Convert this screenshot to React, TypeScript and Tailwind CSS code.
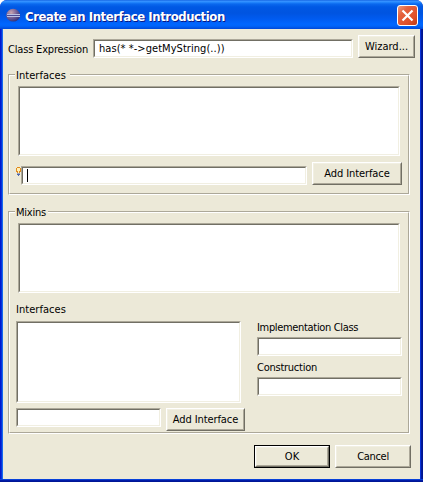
import type { ReactNode } from "react";

function Field({ className = "", children }: { className?: string; children?: ReactNode }) {
  return (
    <div className={`shrink-0 border border-t-[#aca899] border-l-[#aca899] border-r-white border-b-white ${className}`}>
      <div className="flex h-full items-center border border-t-[#716f64] border-l-[#716f64] border-r-[#f1efe2] border-b-[#f1efe2] bg-white">
        {children}
      </div>
    </div>
  );
}

function Button({ className = "", children }: { className?: string; children: ReactNode }) {
  return (
    <button className={`shrink-0 whitespace-nowrap border border-t-white border-l-white border-r-[#716f64] border-b-[#716f64] bg-[#ece9d8] ${className}`}>
      <span className="flex h-full items-center justify-center border border-t-[#f1efe2] border-l-[#f1efe2] border-r-[#aca899] border-b-[#aca899]">
        {children}
      </span>
    </button>
  );
}

function Group({ title, titleClass, className = "", children }: { title: string; titleClass: string; className?: string; children: ReactNode }) {
  return (
    <section className={`ml-[5px] w-[402px] border border-t-[#aca899] border-l-[#aca899] border-r-white border-b-white ${className}`}>
      <div className="h-full border border-t-white border-l-white border-r-[#aca899] border-b-[#aca899]">
        <h2 className={`-mt-[7px] ml-[5px] h-[14px] bg-[#ece9d8] pl-px leading-[14px] ${titleClass}`}>{title}</h2>
        {children}
      </div>
    </section>
  );
}

function EclipseIcon() {
  return (
    <svg className="mt-[2px]" width="16" height="16" viewBox="0 0 16 16">
      <defs>
        <radialGradient id="orb" cx="0.35" cy="0.3" r="0.75">
          <stop offset="0" stopColor="#c9a5b0" />
          <stop offset="0.5" stopColor="#7a6599" />
          <stop offset="1" stopColor="#303078" />
        </radialGradient>
      </defs>
      <ellipse cx="7.2" cy="7.2" rx="6.9" ry="6.4" fill="url(#orb)" />
      <path d="M1 6.5h13M1 8.5h13" stroke="#b9c0e4" />
      <path d="M1 7.5h13" stroke="#4d4991" />
    </svg>
  );
}

function Bulb() {
  return (
    <svg width="5" height="9" viewBox="0 0 5 9" shapeRendering="crispEdges">
      <path d="M1 0h3v1h1v4h-1v1h-3v-1h-1v-4h1z" fill="#e08a1c" />
      <path d="M1 1h3v3h-1v2h-1v-2h-1z" fill="#fff0b8" />
      <path d="M1 6h3v1h-3z" fill="#9ba6c4" />
      <path d="M1 7h3v1h-1v1h-1v-1h-1z" fill="#5068a8" />
    </svg>
  );
}

export default function App() {
  return (
    <div className="h-[482px] w-[423px] bg-white font-['Tahoma','DejaVu_Sans_Condensed','DejaVu_Sans',sans-serif] text-[11px] leading-[14px] text-black">
      <div className="flex h-full flex-col overflow-hidden rounded-t-[7px] bg-[linear-gradient(90deg,#0019cf_0,#0019cf_1px,#0831d9_1px,#0831d9_2px,#166aee_2px,#166aee_3px,#0831d9_3px,#0831d9_421px,#001ea0_421px,#00138c_423px)]">
        <header className="flex h-[29px] shrink-0 items-center bg-[linear-gradient(180deg,#0758dc_0,#3d94ff_1px,#288cff_2px,#0a68ee_4px,#0058e4_7px,#0054e0_13px,#005bf0_19px,#0066ff_24px,#0064fa_26px,#0048d8_29px)] pl-[6px] pr-[5px]">
          <EclipseIcon />
          <h1 className="ml-[3px] mt-[4px] w-[202px] whitespace-nowrap text-[13px] font-bold leading-[16px] tracking-[-0.43px] text-white [text-shadow:1px_1px_0_#0a1883]">
            Create an Interface Introduction
          </h1>
          <span className="ml-auto mt-[2px] flex h-[21px] w-[21px] items-center justify-center rounded-[3px] border border-white bg-[linear-gradient(135deg,#ee9c7c_0,#e4623e_30%,#e0502a_70%,#bf3a14_100%)]">
            <svg width="13" height="13" viewBox="0 0 13 13">
              <path d="M1.5 1.5l10 10M11.5 1.5l-10 10" stroke="#fff" strokeWidth="2.2" />
            </svg>
          </span>
        </header>
        <main className="ml-[3px] h-[450px] w-[417px] shrink-0 bg-[#ece9d8]">
          <div className="flex h-[45px] pl-[5px] pt-[6px]">
            <label className="mt-[8px] w-[85px] whitespace-nowrap tracking-[-0.18px]">Class Expression</label>
            <Field className="mt-[4px] h-[19px] w-[260px]">
              <span className="ml-[4px] mt-px whitespace-nowrap tracking-[0.05px]">has(* *-&gt;getMyString(..))</span>
            </Field>
            <Button className="ml-[5px] h-[23px] w-[57px]">Wizard...</Button>
          </div>
          <Group title="Interfaces" titleClass="w-[55px] tracking-[0.05px]" className="h-[121px]">
            <Field className="ml-[8px] mt-[3px] h-[70px] w-[382px]" />
            <div className="ml-[6px] mt-[6px] flex">
              <div className="flex h-[19px] w-[5px] shrink-0 items-start pt-[5px]">
                <Bulb />
              </div>
              <Field className="mt-[4px] h-[19px] w-[286px]">
                <span className="ml-[4px] h-[13px] w-px bg-black" />
              </Field>
              <Button className="ml-[5px] h-[23px] w-[90px] tracking-[-0.1px]">Add Interface</Button>
            </div>
          </Group>
          <Group title="Mixins" titleClass="w-[33px] tracking-[-0.25px]" className="mt-[16px] h-[223px]">
            <Field className="ml-[8px] mt-[3px] h-[70px] w-[382px]" />
            <div className="ml-[6px] flex">
              <div className="w-[241px]">
                <h3 className="mt-[10px] h-[18px] tracking-[0.05px]">Interfaces</h3>
                <Field className="h-[82px] w-[225px]" />
                <div className="mt-[5px] flex">
                  <Field className="h-[19px] w-[145px]" />
                  <Button className="ml-[5px] h-[23px] w-[79px] tracking-[-0.1px]">Add Interface</Button>
                </div>
              </div>
              <div className="w-[145px]">
                <label className="mt-[28px] block h-[16px] whitespace-nowrap tracking-[-0.33px]">Implementation Class</label>
                <Field className="h-[19px]" />
                <label className="mt-[5px] block h-[16px] tracking-[-0.25px]">Construction</label>
                <Field className="h-[19px]" />
              </div>
            </div>
          </Group>
          <div className="mt-[11px] flex pl-[251px]">
            <div className="h-[23px] w-[76px] border border-black">
              <Button className="h-[21px] w-[74px]">OK</Button>
            </div>
            <Button className="ml-[5px] h-[23px] w-[76px] tracking-[-0.3px]">Cancel</Button>
          </div>
        </main>
        <div className="h-[3px] shrink-0 bg-[linear-gradient(180deg,#0841d9_0,#0841d9_1px,#001eb0_1px,#00138c_3px)]" />
      </div>
    </div>
  );
}
